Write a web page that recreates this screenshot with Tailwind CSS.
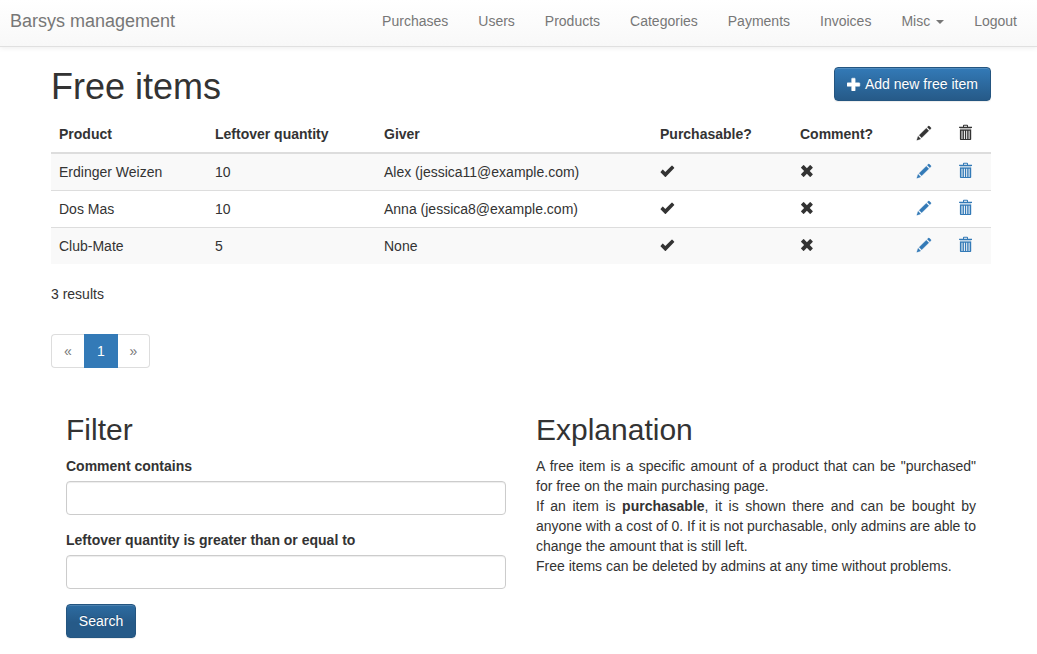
<!DOCTYPE html>
<html lang="en">
<head>
<meta charset="utf-8">
<title>Barsys management</title>
<script src="https://cdn.jsdelivr.net/npm/@tailwindcss/browser@4"></script>
</head>
<body class="h-[654px] overflow-hidden bg-white font-['Liberation_Sans',Arial,sans-serif] text-[14px] leading-5 text-[#333]">
<svg class="hidden">
  <symbol id="plus" viewBox="0 0 1200 1200" overflow="visible"><path transform="matrix(1 0 0 -1 0 1200)" d="M450 1100h200q21 0 35.500-14.500t14.500-35.500v-350h350q21 0 35.500-14.500t14.500-35.500v-200q0-21-14.500-35.500t-35.500-14.500h-350v-350q0-21-14.500-35.500t-35.500-14.500h-200q-21 0-35.500 14.500t-14.500 35.500v350h-350q-21 0-35.500 14.500t-14.500 35.500v200q0 21 14.500 35.500t35.500 14.500h350v350q0 21 14.500 35.500t35.500 14.500z" stroke="currentColor" stroke-width="40"/></symbol>
  <symbol id="pencil" viewBox="0 0 1200 1200" overflow="visible"><path transform="matrix(1 0 0 -1 0 1200)" d="M1011 1210q19 0 33-13l153-153q13-14 13-33t-13-33l-99-92l-214 214l95 96q13 14 32 14zM1013 800l-615-614l-214 214l614 614zM317 96l-333-112l110 335z" stroke="currentColor" stroke-width="26"/></symbol>
  <symbol id="trash" viewBox="0 0 14 14" overflow="visible"><path d="M4-.3Q4-1.200 4.900-1.200H8.100Q9-1.200 9-.3V.7H13V2H.1V.7H4ZM5 .7H8V-.2H5Z"/><path opacity=".3" d="M.9 2H12.200V3.600H.9Z"/><path fill-rule="evenodd" d="M.9 3.500H12.200V13.200Q12.200 14 11.400 14H1.700Q.9 14 .9 13.200ZM2.500 4.800V13H3.500V4.800ZM4.900 4.800V13H5.900V4.800ZM7.200 4.800V13H8.200V4.800ZM9.600 4.800V13H10.600V4.800Z"/></symbol>
  <symbol id="check" viewBox="0 0 14 14" overflow="visible"><path d="M.7 7.800 2.200 5.900Q2.600 5.400 3.100 5.800L5.300 7.900 11.600 1.700Q12 1.300 12.400 1.700L14.100 3.500Q14.500 3.900 14.100 4.300L5.900 12.700Q5.400 13.200 4.900 12.700L.7 8.600Q.3 8.200.7 7.800Z"/></symbol>
  <symbol id="cross" viewBox="0 0 14 14" overflow="visible"><path d="M3.200 1.300Q3.600.9 4 1.300L6.900 4.200 9.800 1.300Q10.200.9 10.600 1.300L12.600 3.300Q13 3.700 12.600 4.100L9.700 7 12.600 9.900Q13 10.300 12.600 10.700L10.600 12.700Q10.200 13.100 9.800 12.700L6.900 9.800 4 12.700Q3.600 13.100 3.200 12.700L1.200 10.700Q.8 10.300 1.200 9.900L4.100 7 1.200 4.100Q.8 3.700 1.200 3.300Z"/></symbol>
</svg>
<header class="flex h-[47px] items-start justify-between border-b border-[#e0e0e0] bg-linear-to-b from-white to-[#f8f8f8] pr-5 pl-[10px] pt-[11px] text-[#777] shadow-[0_1px_5px_rgba(0,0,0,0.075)]">
  <a class="text-[18px] leading-5">Barsys management</a>
  <nav class="flex gap-[30px]">
    <a>Purchases</a><a>Users</a><a>Products</a><a>Categories</a><a>Payments</a><a>Invoices</a>
    <a class="flex items-center">Misc<span class="ml-[6px] mt-px border-x-4 border-t-4 border-x-transparent border-t-[#777]"></span></a>
    <a>Logout</a>
  </nav>
</header>
<main class="ml-[51px] w-[940px]">
  <div class="flex h-[69px] items-start justify-between pt-5">
    <h1 class="text-[36px] leading-[40px] font-medium">Free items</h1>
    <a class="flex h-[34px] w-[157px] items-center rounded-[4px] border border-[#245580] bg-linear-to-b from-[#337ab7] to-[#265a88] pl-3 text-white shadow-[inset_0_1px_0_rgba(255,255,255,0.15),0_1px_1px_rgba(0,0,0,0.075)] text-shadow-[0_-1px_0_rgba(0,0,0,0.2)]"><svg class="mr-1 mb-px size-[14px] fill-white"><use href="#plus"/></svg>Add new free item</a>
  </div>
  <table class="w-full table-fixed border-separate border-spacing-0 text-left [&_td]:p-2 [&_th]:p-2 [&_svg]:block [&_svg]:size-[14px] [&_svg]:fill-current [&_svg]:overflow-visible [&_th]:border-b-2 [&_th]:border-[#ddd] [&_td]:h-9">
    <colgroup><col class="w-[156px]"><col class="w-[169px]"><col class="w-[276px]"><col class="w-[140px]"><col class="w-[117px]"><col class="w-[42px]"><col class="w-[40px]"></colgroup>
    <thead><tr class="h-[38px]"><th>Product</th><th>Leftover quantity</th><th>Giver</th><th>Purchasable?</th><th>Comment?</th><th><svg class="-mt-0.5"><use href="#pencil"/></svg></th><th><svg class="-mt-0.5"><use href="#trash"/></svg></th></tr></thead>
    <tbody>
      <tr class="bg-[#f9f9f9]"><td>Erdinger Weizen</td><td>10</td><td>Alex (jessica11@example.com)</td><td><svg class="-mt-0.5"><use href="#check"/></svg></td><td><svg class="-mt-0.5"><use href="#cross"/></svg></td><td class="text-[#337ab7]"><svg class="-mt-0.5"><use href="#pencil"/></svg></td><td class="text-[#337ab7]"><svg class="-mt-0.5"><use href="#trash"/></svg></td></tr>
      <tr class="[&>td]:h-[37px] [&>td]:border-t [&>td]:border-[#ddd]"><td>Dos Mas</td><td>10</td><td>Anna (jessica8@example.com)</td><td><svg class="-mt-0.5"><use href="#check"/></svg></td><td><svg class="-mt-0.5"><use href="#cross"/></svg></td><td class="text-[#337ab7]"><svg class="-mt-0.5"><use href="#pencil"/></svg></td><td class="text-[#337ab7]"><svg class="-mt-0.5"><use href="#trash"/></svg></td></tr>
      <tr class="bg-[#f9f9f9] [&>td]:h-[37px] [&>td]:border-t [&>td]:border-[#ddd]"><td>Club-Mate</td><td>5</td><td>None</td><td><svg class="-mt-0.5"><use href="#check"/></svg></td><td><svg class="-mt-0.5"><use href="#cross"/></svg></td><td class="text-[#337ab7]"><svg class="-mt-0.5"><use href="#pencil"/></svg></td><td class="text-[#337ab7]"><svg class="-mt-0.5"><use href="#trash"/></svg></td></tr>
    </tbody>
  </table>
  <p class="mt-5">3 results</p>
  <div class="mt-[30px] flex h-[34px] w-[99px] text-center leading-[34px]">
    <span class="w-[33px] rounded-l-[4px] border border-r-0 border-[#ddd] leading-8 text-[#777]">«</span>
    <span class="w-[34px] bg-[#337ab7] text-white">1</span>
    <span class="w-8 rounded-r-[4px] border border-l-0 border-[#ddd] leading-8 text-[#777]">»</span>
  </div>
  <div class="mt-[45px] flex gap-[30px] px-[15px]">
    <form class="w-[440px]">
      <h2 class="mb-[10px] text-[30px] leading-[33px] font-medium">Filter</h2>
      <label class="mb-[5px] block font-bold">Comment contains</label>
      <input class="mb-[15px] block h-[34px] w-full rounded-[4px] border border-[#ccc] bg-white px-3 shadow-[inset_0_1px_1px_rgba(0,0,0,0.075)]">
      <label class="mb-[5px] block font-bold">Leftover quantity is greater than or equal to</label>
      <input class="mb-[15px] block h-[34px] w-full rounded-[4px] border border-[#ccc] bg-white px-3 shadow-[inset_0_1px_1px_rgba(0,0,0,0.075)]">
      <button type="button" class="h-[34px] w-[70px] rounded-[4px] border border-[#245580] bg-linear-to-b from-[#2d6ca2] to-[#265a88] to-55% text-white shadow-[inset_0_1px_0_rgba(255,255,255,0.15),0_1px_1px_rgba(0,0,0,0.075)] text-shadow-[0_-1px_0_rgba(0,0,0,0.2)]">Search</button>
    </form>
    <section class="w-[440px]">
      <h2 class="mb-[10px] text-[30px] leading-[33px] font-medium">Explanation</h2>
      <p class="text-justify">A free item is a specific amount of a product that can be "purchased" for free on the main purchasing page.<br>If an item is <b>purchasable</b>, it is shown there and can be bought by anyone with a cost of 0. If it is not purchasable, only admins are able to change the amount that is still left.<br>Free items can be deleted by admins at any time without problems.</p>
    </section>
  </div>
</main>
</body>
</html>
